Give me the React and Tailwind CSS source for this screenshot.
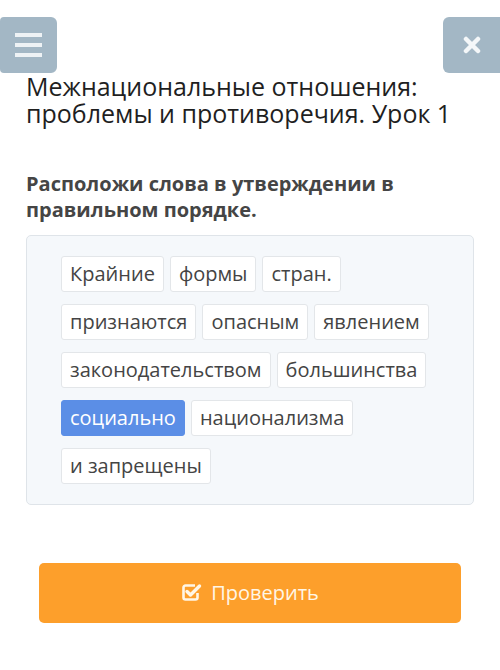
const ROWS = [
  ["Крайние", "формы", "стран."],
  ["признаются", "опасным", "явлением"],
  ["законодательством", "большинства"],
  ["социально", "национализма"],
  ["и запрещены"],
];

function Chip({ word, active }) {
  return (
    <span
      className={`rounded-[3px] border px-[8px] py-[4px] text-[20px] leading-[26px] ${
        active ? "border-[#5b8ee6] bg-[#5b8ee6] text-white" : "border-[#e3e6e9] bg-white text-[#444]"
      }`}
    >
      {word}
    </span>
  );
}

export default function App() {
  return (
    <div className="relative h-[670px] w-[500px] overflow-hidden bg-white font-['Open_Sans',sans-serif]">
      {/* top buttons */}
      <div className="flex items-start justify-between pt-[17px]">
        <button className="flex h-[56px] w-[57px] flex-col items-center justify-center gap-[6px] rounded-r-[6px] rounded-l-[4px] bg-[#a3b7c5]">
          <span className="h-[4px] w-[27px] bg-[#eef2f5]" />
          <span className="h-[4px] w-[27px] bg-[#eef2f5]" />
          <span className="h-[4px] w-[27px] bg-[#eef2f5]" />
        </button>
        <button className="flex h-[56px] w-[57px] items-center justify-center rounded-l-[6px] bg-[#a3b7c5]">
          <svg width="18" height="18" viewBox="0 0 18 18">
            <path d="M3 3 L15 15 M15 3 L3 15" stroke="#f4f7f9" strokeWidth="4.5" strokeLinecap="round" />
          </svg>
        </button>
      </div>

      <div className="px-[26px]">
        <h1 className="text-[25px] leading-[27px] text-[#1f1f1f]">
          Межнациональные отношения: проблемы и противоречия. Урок 1
        </h1>

        <p className="mt-[44px] text-[20px] font-bold leading-[26px] text-[#454545]">
          Расположи слова в утверждении в правильном порядке.
        </p>

        <div className="mt-[12px] flex h-[270px] flex-col gap-[12px] rounded-[5px] border border-[#dfe4e9] bg-[#f5f8fb] px-[34px] pt-[20px]">
          {ROWS.map((row, i) => (
            <div key={i} className="flex gap-[6px]">
              {row.map((w) => (
                <Chip key={w} word={w} active={w === "социально"} />
              ))}
            </div>
          ))}
        </div>
      </div>

      <div className="px-[39px] pt-[58px]">
        <button className="flex h-[60px] w-full items-center justify-center gap-[9px] rounded-[5px] bg-[#fd9f2b] text-[20px] text-[#fff6e6]">
          <svg width="21" height="20" viewBox="0 0 21 20" className="-mt-[2px]">
            <path
              d="M14 3.5 H4.5 A2 2 0 0 0 2.5 5.5 V15.5 A2 2 0 0 0 4.5 17.5 H14.5 A2 2 0 0 0 16.5 15.5 V11"
              fill="none"
              stroke="#fff6e6"
              strokeWidth="2.6"
            />
            <path d="M6 9.5 L9.5 13 L18.5 4" fill="none" stroke="#fff6e6" strokeWidth="3.4" strokeLinecap="round" strokeLinejoin="round" />
          </svg>
          Проверить
        </button>
      </div>
    </div>
  );
}
